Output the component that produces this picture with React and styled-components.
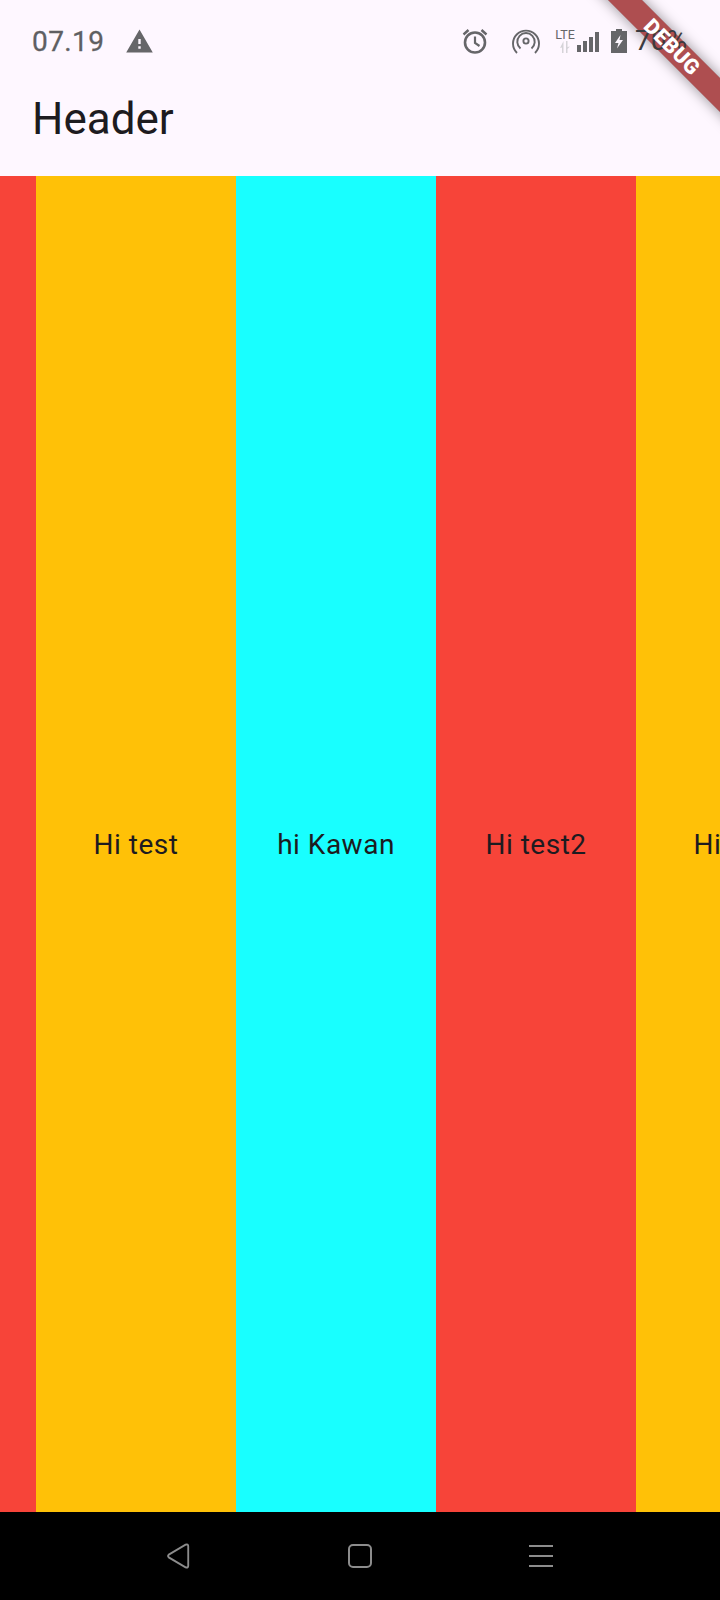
import React from 'react';
import styled, { createGlobalStyle, css } from 'styled-components';

const GlobalStyle = createGlobalStyle`
  html, body {
    margin: 0;
    padding: 0;
    background: #000;
  }
  body {
    font-family: Roboto, "Noto Sans", sans-serif;
  }
`;

const Screen = styled.div`
  position: relative;
  width: 720px;
  height: 1600px;
  overflow: hidden;
  display: flex;
  flex-direction: column;
  background: #fef7ff;
`;

const StatusBar = styled.div`
  height: 64px;
  padding: 18px 33px 0 32px;
  box-sizing: border-box;
  display: flex;
  align-items: center;
  justify-content: space-between;
  flex: none;
`;

const StatusGroup = styled.div`
  display: flex;
  align-items: center;
`;

const Time = styled.span`
  font-size: 28px;
  line-height: 32px;
  color: #5f5f62;
  letter-spacing: 0.4px;
  -webkit-text-stroke: 0.3px #5f5f62;
  margin: 2px 21px 0 0;
`;

const Percent = styled.span`
  position: relative;
  z-index: 1;
  flex: none;
  white-space: nowrap;
  font-size: 28px;
  line-height: 32px;
  color: #3c3b3f;
  margin-left: 8px;
`;

const IconGap = styled.span`
  width: 24px;
`;

const LteBlock = styled.div`
  width: 20px;
  height: 26px;
  margin: 0 2px 0 15px;
  display: flex;
  flex-direction: column;
  align-items: center;
`;

const LteText = styled.span`
  font-size: 12.5px;
  line-height: 13px;
  color: #666669;
`;

const AppBar = styled.header`
  height: 112px;
  padding-left: 32px;
  display: flex;
  align-items: center;
  flex: none;
`;

const Title = styled.h1`
  margin: 0 0 2px;
  font-size: 44px;
  font-weight: 400;
  line-height: 56px;
  color: #1d1b20;
`;

const Scroller = styled.main`
  flex: 1;
  overflow: hidden;
  display: flex;
`;

const Strip = styled.div`
  display: flex;
  flex: none;
  margin-left: -164px;
`;

const Column = styled.div`
  width: 200px;
  flex: none;
  display: flex;
  align-items: center;
  justify-content: center;
  background: ${(props) => props.$color};
  padding-top: 2px;
  box-sizing: border-box;
`;

const Label = styled.span`
  font-size: 28px;
  line-height: 40px;
  letter-spacing: 0.5px;
  color: #1d1b20;
`;

const NavBar = styled.nav`
  height: 88px;
  flex: none;
  background: #000;
  display: flex;
  align-items: center;
  justify-content: center;
  gap: 157px;
  box-sizing: border-box;
`;

const ribbonPlace = css`
  position: absolute;
  top: 35px;
  left: 572px;
  width: 200px;
  height: 24px;
  transform: rotate(45deg);
`;

// band and label are split so the status text can sit between them
const RibbonBand = styled.div`
  ${ribbonPlace}
  background: rgba(140, 6, 6, 0.7);
  box-shadow: 0 0 14px rgba(0, 0, 0, 0.42);
`;

const RibbonLabel = styled.div`
  ${ribbonPlace}
  z-index: 2;
  display: flex;
  align-items: center;
  justify-content: center;
  color: #fff;
  font-size: 21px;
  font-weight: 900;
  line-height: 24px;
  letter-spacing: 0.4px;
`;

const WarningIcon = () => (
  <svg width="29" height="29" viewBox="0 0 24 24" fill="#666669">
    <path d="M1 21h22L12 2 1 21zm12-3h-2v-2h2v2zm0-4h-2v-4h2v4z" />
  </svg>
);

const AlarmIcon = () => (
  <svg width="26" height="26" viewBox="0 0 26 26" fill="none" stroke="#666669" strokeWidth="2.6">
    <circle cx="13" cy="14.5" r="10" />
    <path d="M13 8.500V15l4.500 3" strokeWidth="2.2" />
    <path d="M1.500 6.500L6.500 2M24.500 6.500L19.500 2" strokeWidth="2.4" />
  </svg>
);

const HotspotIcon = () => (
  <svg width="28" height="26" viewBox="0 0 28 26" fill="none" stroke="#666669" strokeWidth="1.9">
    <circle cx="14" cy="13" r="2.6" />
    <path d="M8.500 20.500A8.700 8.700 0 1 1 19.500 20.500" />
    <path d="M5 25A13 13 0 1 1 23 25" />
  </svg>
);

const LteArrows = () => (
  <svg width="10" height="12" viewBox="0 0 10 12" fill="#d5d3d8">
    <path d="M3.500 0V12H2V6.500L0 7zM6 0h1.500V6L10 5.500 7.500 8v4H6z" />
  </svg>
);

const SignalIcon = () => (
  <svg width="22" height="20" viewBox="0 0 22 20" fill="#666669" style={{ marginTop: 1 }}>
    <rect x="0" y="13" width="4" height="7" />
    <rect x="6" y="9" width="4" height="11" />
    <rect x="12" y="5" width="4" height="15" />
    <rect x="18" y="0" width="4" height="20" />
  </svg>
);

const BatteryIcon = () => (
  <svg width="16" height="24" viewBox="0 0 16 24" style={{ marginLeft: 12 }}>
    <path d="M5 0h6v2h5v22H0V2h5z" fill="#666669" />
    <path d="M9.500 6L4 14h3.500L6 19.500 12 11H8.500z" fill="#fef7ff" />
  </svg>
);

const BackIcon = () => (
  <svg
    width="23"
    height="26"
    viewBox="0 0 26 28"
    preserveAspectRatio="none"
    fill="none"
    stroke="#8c8c8c"
    strokeWidth="2.1"
    style={{ margin: '0 1px 0 -1px' }}
  >
    <path d="M2 12.500L21 1.800Q24 0.800 24 3.500V24.500Q24 27.200 21 26.200L2 15.500Q0.500 14 2 12.500Z" />
  </svg>
);

const HomeIcon = () => (
  <svg width="24" height="24" viewBox="0 0 24 24" fill="none" stroke="#8c8c8c" strokeWidth="2">
    <rect x="1" y="1" width="22" height="22" rx="4" />
  </svg>
);

const MenuIcon = () => (
  <svg width="24" height="22" viewBox="0 0 24 22" fill="none" stroke="#8c8c8c" strokeWidth="2">
    <path d="M0 1h24M0 11h24M0 21h24" />
  </svg>
);

const columns = [
  { id: 1, color: '#f74439', label: '' },
  { id: 2, color: '#ffc107', label: 'Hi test' },
  { id: 3, color: '#18ffff', label: 'hi Kawan' },
  { id: 4, color: '#f74439', label: 'Hi test2' },
  { id: 5, color: '#ffc107', label: 'Hi test' },
];

const App = () => (
  <Screen>
    <GlobalStyle />
    <RibbonBand />
    <StatusBar>
      <StatusGroup>
        <Time>07.19</Time>
        <WarningIcon />
      </StatusGroup>
      <StatusGroup>
        <AlarmIcon />
        <IconGap />
        <HotspotIcon />
        <LteBlock>
          <LteText>LTE</LteText>
          <LteArrows />
        </LteBlock>
        <SignalIcon />
        <BatteryIcon />
        <Percent>70%</Percent>
      </StatusGroup>
    </StatusBar>
    <AppBar>
      <Title>Header</Title>
    </AppBar>
    <Scroller>
      <Strip>
        {columns.map((column) => (
          <Column key={column.id} $color={column.color}>
            <Label>{column.label}</Label>
          </Column>
        ))}
      </Strip>
    </Scroller>
    <NavBar>
      <BackIcon />
      <HomeIcon />
      <MenuIcon />
    </NavBar>
    <RibbonLabel>DEBUG</RibbonLabel>
  </Screen>
);

export default App;
